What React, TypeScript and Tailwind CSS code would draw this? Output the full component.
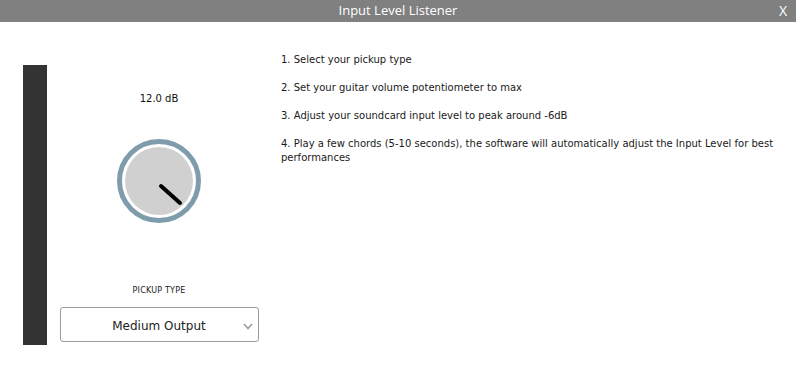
const steps = [
  "1. Select your pickup type",
  "2. Set your guitar volume potentiometer to max",
  "3. Adjust your soundcard input level to peak around -6dB",
  "4. Play a few chords (5-10 seconds), the software will automatically adjust the Input Level for best performances"
];

function Knob() {
  return (
    <svg width="90" height="90" viewBox="0 0 90 90" aria-hidden="true">
      <circle cx="45" cy="45" r="39.5" fill="#ffffff" stroke="#7f9cad" strokeWidth="5" />
      <circle cx="45" cy="45" r="34" fill="#d0d0d0" />
      <line x1="47" y1="50" x2="66" y2="67" stroke="#000000" strokeWidth="4" strokeLinecap="round" />
    </svg>
  );
}

export default function App() {
  return (
    <div className="flex h-[380px] w-[796px] flex-col bg-white" style={{ fontFamily: "'DejaVu Sans', sans-serif" }}>
      <div className="relative flex h-[22px] items-center justify-center bg-[#808080] text-white">
        <span className="text-[13px] font-['Open_Sans',sans-serif]">Input Level Listener</span>
        <span className="absolute right-[9px] top-[2px] text-[14px] leading-[18px] font-['Open_Sans',sans-serif]">X</span>
      </div>

      <div className="flex items-start">
        <div className="ml-[23px] mt-[43px] h-[280px] w-[24px] bg-[#333333]" />

        <div className="ml-[12px] flex w-[200px] flex-col items-center pt-[70px]">
          <p className="text-[10px] leading-[14px] text-[#111]">12.0 dB</p>
          <div className="mt-[30px]">
            <Knob />
          </div>
          <p className="mt-[59px] text-[8px] leading-[12px] tracking-[0.2px] text-[#222]">PICKUP TYPE</p>
          <div className="relative mt-[10px] flex h-[35px] w-[199px] items-center justify-center rounded-[3px] border border-[#9a9a9a]">
            <span className="mt-[2px] text-[12px] text-[#222]">Medium Output</span>
            <svg className="absolute right-[5px] top-[15px]" width="10" height="7" viewBox="0 0 10 7" aria-hidden="true">
              <polyline points="1,1 5,5.5 9,1" fill="none" stroke="#a0a0a0" strokeWidth="1.8" />
            </svg>
          </div>
        </div>

        <div className="ml-[22px] mr-[12px] flex flex-1 flex-col gap-[14px] pt-[31px] text-[10px] leading-[14px] text-[#1a1a1a]">
          {steps.map((s) => (
            <p key={s}>{s}</p>
          ))}
        </div>
      </div>
    </div>
  );
}
